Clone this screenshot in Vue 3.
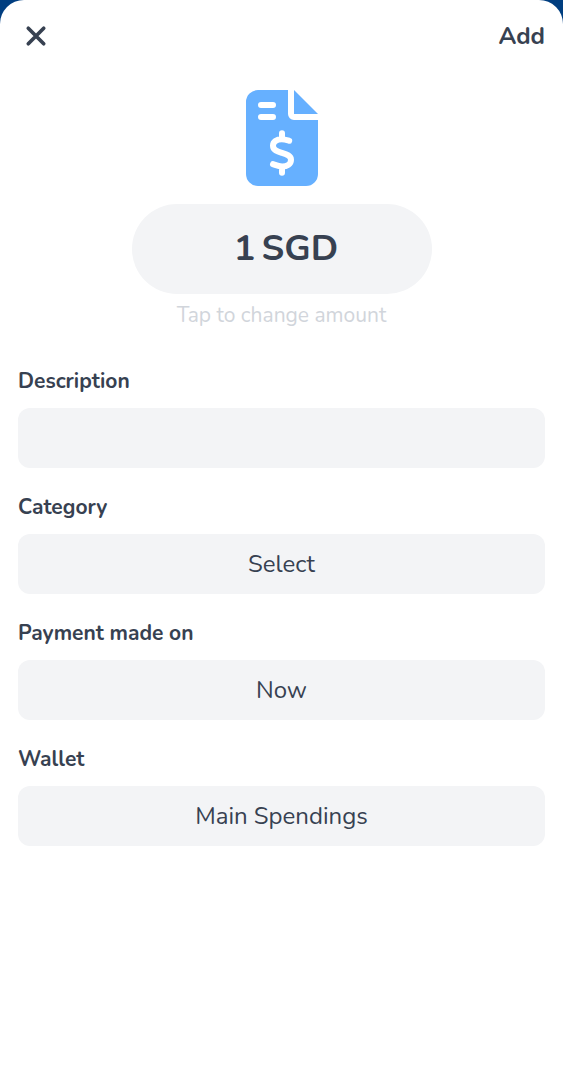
<script setup>
const fields = [
  { label: 'Description', value: '', key: 'description' },
  { label: 'Category', value: 'Select', key: 'category' },
  { label: 'Payment made on', value: 'Now', key: 'date' },
  { label: 'Wallet', value: 'Main Spendings', key: 'wallet' },
]
</script>

<template>
  <main class="sheet">
    <header class="bar">
      <button class="close" aria-label="Close">
        <svg width="36" height="36" viewBox="0 0 36 36">
          <path d="M10.3 10.3L25.7 25.7M25.7 10.3L10.3 25.7" />
        </svg>
      </button>
      <button class="add"><span>Add</span></button>
    </header>

    <section class="summary">
      <svg class="invoice" width="72" height="96" viewBox="0 0 72 96">
        <path class="paper" d="M12 0H42V24a6 6 0 0 0 6 6H72V84a12 12 0 0 1-12 12H12A12 12 0 0 1 0 84V12A12 12 0 0 1 12 0Z" />
        <path class="paper" d="M48 0L72 24H48Z" />
        <path class="mark" d="M15 15H27M15 27H27M36 43.3V48M36 78V82.7M43.2 50.8C40.5 50 38.2 49.3 35.7 49.3C30.6 49.3 27 51.8 27 55.7C27 60.2 31.5 61.6 35.8 62.9C40.8 64.4 45 65.6 45 69.8C45 74.3 41 76.6 36.2 76.6C33 76.6 29.8 75.2 27 74.2" />
      </svg>
      <button class="amount"><span class="number">1</span><span class="currency">SGD</span></button>
      <p class="hint">Tap to change amount</p>
    </section>

    <form class="fields">
      <div v-for="f in fields" :key="f.key" class="field">
        <span class="label">{{ f.label }}</span>
        <div class="box">{{ f.value }}</div>
      </div>
    </form>
  </main>
</template>

<style>
body {
  background: #003e80;
}
</style>

<style scoped>
.sheet {
  box-sizing: border-box;
  min-height: 1079px;
  padding: 0 18px;
  background: #fff;
  border-radius: 24px 24px 0 0;
  color: #374151;
  font-family: Nunito, Lato, sans-serif;
}
button {
  padding: 0;
  border: 0;
  background: none;
  color: inherit;
  font: inherit;
}
.bar {
  display: flex;
  justify-content: space-between;
  align-items: center;
  height: 72px;
}
.close {
  width: 36px;
  height: 36px;
}
.close svg {
  display: block;
  fill: none;
  stroke: #374151;
  stroke-width: 3.7;
  stroke-linecap: round;
}
.add {
  font-size: 24px;
  line-height: 36px;
  font-weight: 700;
}
.summary {
  display: flex;
  flex-direction: column;
  align-items: center;
  padding-top: 18px;
}
.paper {
  fill: #66b0ff;
}
.mark {
  fill: none;
  stroke: #fff;
  stroke-width: 6;
  stroke-linecap: round;
  stroke-linejoin: round;
}
.amount {
  box-sizing: border-box;
  display: flex;
  justify-content: center;
  align-items: center;
  gap: 6px;
  width: 300px;
  height: 90px;
  margin-top: 18px;
  padding-left: 9px;
  padding-bottom: 2px;
  border-radius: 45px;
  background: #f3f4f6;
  font-size: 36px;
  font-weight: 700;
}
.hint {
  margin: 6px 0 0;
  color: #d1d5db;
  font-size: 21px;
  line-height: 30px;
}
.fields {
  display: flex;
  flex-direction: column;
  gap: 24px;
  margin-top: 36px;
}
.field {
  display: flex;
  flex-direction: column;
  gap: 12px;
}
.label {
  font-size: 21px;
  line-height: 30px;
  font-weight: 700;
}
.box {
  height: 60px;
  border-radius: 12px;
  background: #f3f4f6;
  font-size: 24px;
  line-height: 60px;
  text-align: center;
}
</style>
